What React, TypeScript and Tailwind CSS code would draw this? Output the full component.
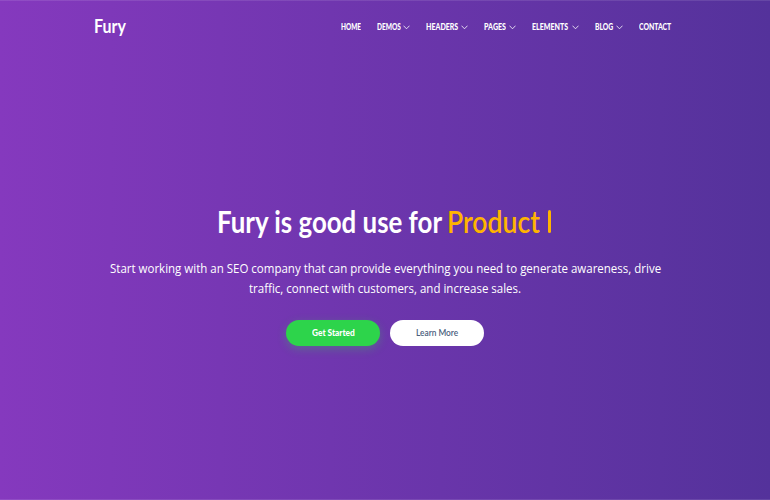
import { useLayoutEffect, useRef, useState } from "react";

type CondensedProps = { children: string; className: string };

// Condenses a line of text horizontally to the width of its box.
function Condensed({ children, className }: CondensedProps) {
  const box = useRef<HTMLSpanElement>(null);
  const text = useRef<HTMLSpanElement>(null);
  const [scale, setScale] = useState(1);

  useLayoutEffect(() => {
    if (box.current && text.current) {
      setScale(box.current.clientWidth / text.current.offsetWidth);
    }
  }, []);

  return (
    <span ref={box} className={`block shrink-0 whitespace-nowrap ${className}`}>
      <span ref={text} className="inline-block origin-left" style={{ transform: `scaleX(${scale})` }}>
        {children}
      </span>
    </span>
  );
}

const navItems = [
  { label: "HOME", width: "w-[20px]", gap: "", menu: false },
  { label: "DEMOS", width: "w-[24px]", gap: "gap-[2px]", menu: true },
  { label: "HEADERS", width: "w-[32px]", gap: "gap-[3px]", menu: true },
  { label: "PAGES", width: "w-[22px]", gap: "gap-[3px]", menu: true },
  { label: "ELEMENTS", width: "w-[36px]", gap: "gap-[4px]", menu: true },
  { label: "BLOG", width: "w-[18px]", gap: "gap-[3px]", menu: true },
  { label: "CONTACT", width: "w-[32px]", gap: "", menu: false },
];

function Chevron() {
  return (
    <svg className="mt-px h-[5px] w-[7px] shrink-0" viewBox="0 0 7 5" fill="none" stroke="white" strokeWidth="0.8">
      <path d="M0.5 0.7 3.5 3.8 6.5 0.7" />
    </svg>
  );
}

export default function App() {
  return (
    <div className="h-[500px] w-[770px] overflow-hidden border-y border-y-white/10 bg-[linear-gradient(90deg,#8539be_0%,#54329b_100%)] bg-origin-border font-['Lato',sans-serif] text-white">
      <header className="flex h-[52px] items-center pr-[99px] pl-[94px]">
        <Condensed className="mb-[3px] w-[32px] text-[18px] leading-[24px] font-bold">Fury</Condensed>
        <nav className="ml-auto flex items-center gap-[16px]">
          {navItems.map((item) => (
            <a key={item.label} href="#" className={`flex items-center ${item.gap}`}>
              <Condensed className={`${item.width} text-[9px] leading-[12px] font-black`}>{item.label}</Condensed>
              {item.menu && <Chevron />}
            </a>
          ))}
        </nav>
      </header>

      <main className="flex flex-col items-center pt-[144px]">
        <h1 className="flex h-[48px] w-[337px] items-center text-[30px] leading-[48px] font-bold">
          <Condensed className="w-[225px]">Fury is good use for</Condensed>
          <Condensed className="ml-[5px] w-[93px] font-semibold text-[#ffb400]">Product</Condensed>
          <span className="ml-[8px] h-[23px] w-[3px] rounded-full bg-[#ffb400]" />
        </h1>
        <p className="mt-[14px] flex flex-col items-center font-['Open_Sans',sans-serif] text-[12.25px] leading-[20px] font-medium">
          <Condensed className="w-[551px]">
            Start working with an SEO company that can provide everything you need to generate awareness, drive
          </Condensed>
          <Condensed className="w-[272px]">traffic, connect with customers, and increase sales.</Condensed>
        </p>
        <div className="mt-[21px] flex gap-[10px]">
          <button className="flex h-[26px] w-[94px] items-center justify-center rounded-full bg-[#2dd44b] shadow-[0_3px_10px_rgba(45,212,75,0.3)]">
            <Condensed className="w-[43px] text-[9.5px] leading-[14px] font-black">Get Started</Condensed>
          </button>
          <button className="flex h-[26px] w-[94px] items-center justify-center rounded-full bg-white text-[#4a607c]">
            <Condensed className="w-[42px] text-[9.5px] leading-[14px] font-semibold">Learn More</Condensed>
          </button>
        </div>
      </main>
    </div>
  );
}
